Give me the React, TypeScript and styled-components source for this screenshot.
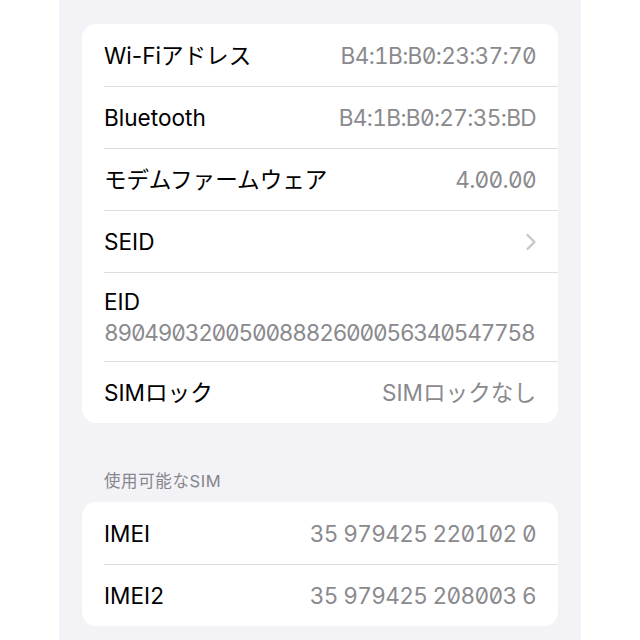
import React from "react";
import styled, { createGlobalStyle } from "styled-components";

const GlobalStyle = createGlobalStyle`
  html, body {
    margin: 0;
    padding: 0;
    background: #ffffff;
  }
  body {
    font-family: "Inter", "Noto Sans CJK JP", sans-serif;
    -webkit-font-smoothing: antialiased;
  }
`;

const Panel = styled.div`
  width: 522px;
  min-height: 640px;
  margin: 0 auto;
  box-sizing: border-box;
  padding: 24px 23px 0 23px;
  background: #f2f2f7;
`;

const Card = styled.div`
  background: #ffffff;
  border-radius: 14px;
  overflow: hidden;
`;

const Row = styled.div<{ $tall?: boolean }>`
  box-sizing: border-box;
  margin-left: 22px;
  padding-right: 22px;
  height: ${(p) => (p.$tall ? "89px" : "62px")};
  border-top: 1px solid #dededf;
  display: flex;
  flex-direction: ${(p) => (p.$tall ? "column" : "row")};
  align-items: ${(p) => (p.$tall ? "stretch" : "center")};
  justify-content: ${(p) => (p.$tall ? "flex-start" : "space-between")};
  padding-top: ${(p) => (p.$tall ? "13px" : "0")};
  &:first-child {
    border-top: none;
  }
`;

const Label = styled.span`
  font-size: 22.6px;
  line-height: 31px;
  color: #000000;
  white-space: nowrap;
`;

const Value = styled.span<{ $spacing?: number }>`
  font-size: 22.6px;
  line-height: 31px;
  color: #8a8a8e;
  white-space: nowrap;
  letter-spacing: ${(p) => (p.$spacing ?? -0.65)}px;
  font-feature-settings: "tnum" 1, "zero" 1;
`;

const Chevron = styled.svg`
  width: 12px;
  height: 18px;
  display: block;
  margin-right: -1px;
`;

const SectionHeader = styled.div`
  margin: 48px 0 11px 0;
  padding-left: 22px;
  font-size: 16.5px;
  line-height: 20px;
  letter-spacing: 0.6px;
  color: #86868b;
`;

const rows1: { label: string; value?: string; chevron?: boolean }[] = [
  { label: "Wi-Fiアドレス", value: "B4:1B:B0:23:37:70" },
  { label: "Bluetooth", value: "B4:1B:B0:27:35:BD" },
  { label: "モデムファームウェア", value: "4.00.00" },
  { label: "SEID", chevron: true },
];

const rows2 = [
  { label: "IMEI", value: "35 979425 220102 0" },
  { label: "IMEI2", value: "35 979425 208003 6" },
];

export default function App() {
  return (
    <>
      <GlobalStyle />
      <Panel>
        <Card>
          {rows1.map((r) => (
            <Row key={r.label}>
              <Label>{r.label}</Label>
              {r.value && <Value>{r.value}</Value>}
              {r.chevron && (
                <Chevron viewBox="0 0 12 18">
                  <path
                    d="M2.5 2 L9.5 9 L2.5 16"
                    fill="none"
                    stroke="#c7c7cc"
                    strokeWidth="2.4"
                    strokeLinecap="round"
                    strokeLinejoin="round"
                  />
                </Chevron>
              )}
            </Row>
          ))}
          <Row $tall>
            <Label>EID</Label>
            <Value $spacing={-1.2}>89049032005008882600056340547758</Value>
          </Row>
          <Row>
            <Label>SIMロック</Label>
            <Value $spacing={0}>SIMロックなし</Value>
          </Row>
        </Card>
        <SectionHeader>使用可能なSIM</SectionHeader>
        <Card>
          {rows2.map((r) => (
            <Row key={r.label}>
              <Label>{r.label}</Label>
              <Value>{r.value}</Value>
            </Row>
          ))}
        </Card>
      </Panel>
    </>
  );
}
